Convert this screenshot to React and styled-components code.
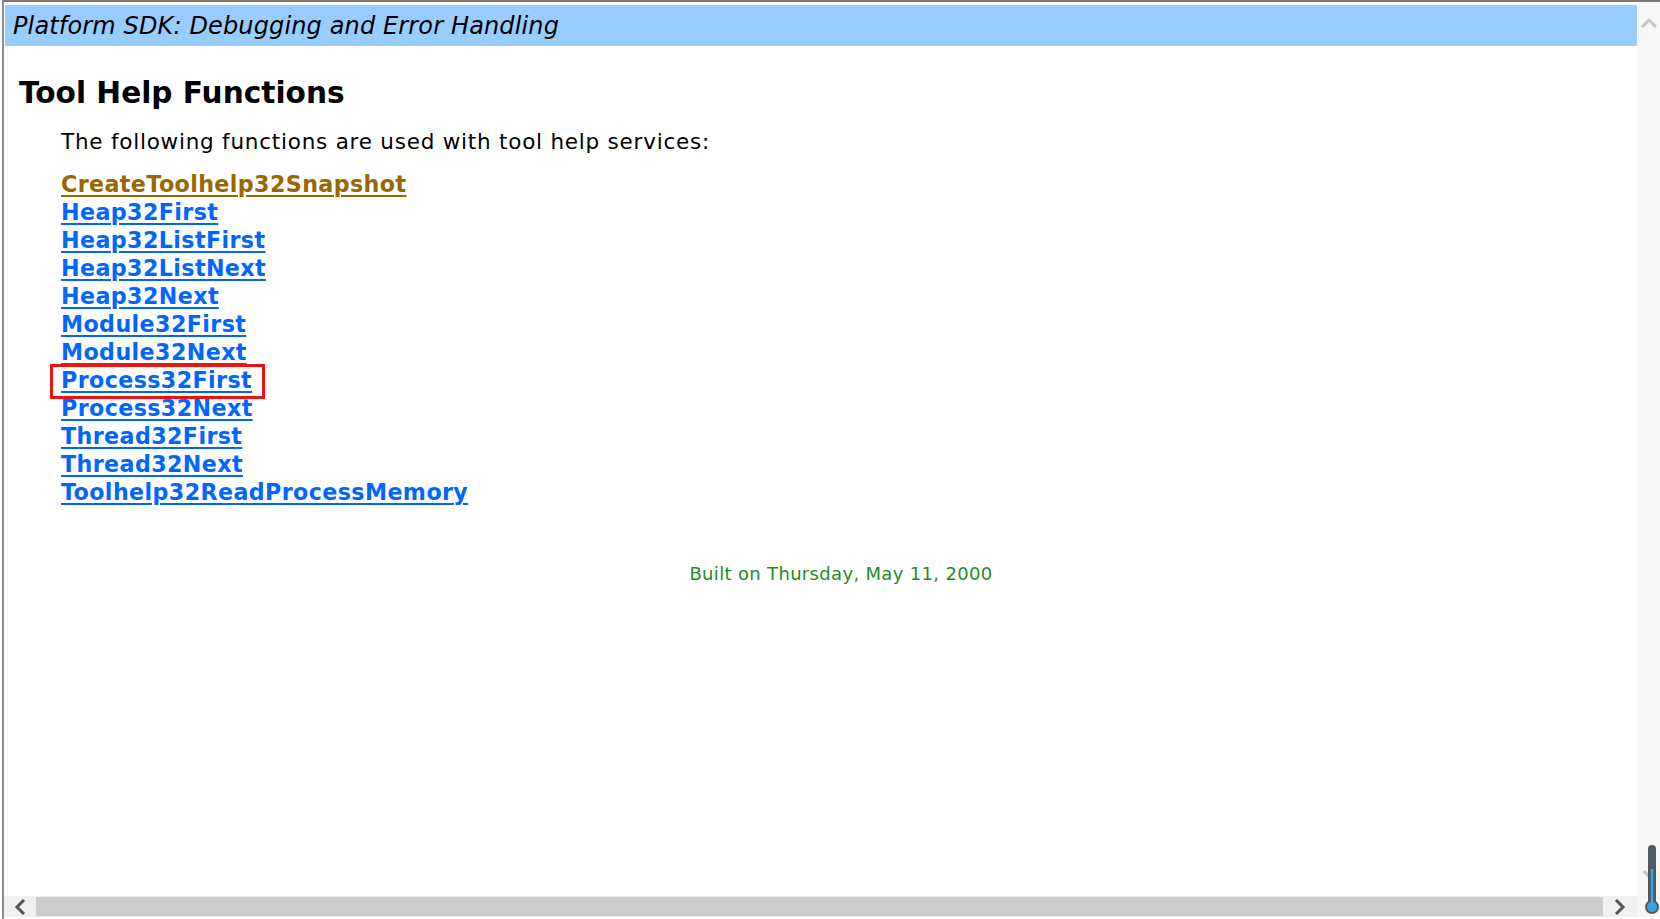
import React from 'react'
import styled, { createGlobalStyle } from 'styled-components'

const links = [
    { name: 'CreateToolhelp32Snapshot', visited: true },
    { name: 'Heap32First' },
    { name: 'Heap32ListFirst' },
    { name: 'Heap32ListNext' },
    { name: 'Heap32Next' },
    { name: 'Module32First' },
    { name: 'Module32Next' },
    { name: 'Process32First', marked: true },
    { name: 'Process32Next' },
    { name: 'Thread32First' },
    { name: 'Thread32Next' },
    { name: 'Toolhelp32ReadProcessMemory' },
]

const GlobalStyle = createGlobalStyle`
    html, body {
        margin: 0;
        padding: 0;
        background: #fff;
        overflow: hidden;
    }
    body {
        font-family: "DejaVu Sans", Verdana, sans-serif;
    }
`

const Window = styled.div`
    position: relative;
    height: 919px;
    box-sizing: border-box;
    margin-left: 2px;
    border-top: 2px solid #7a7a7a;
    border-left: 2px solid #8c8c8c;
    display: flex;
    flex-direction: column;
    overflow: hidden;
`

const Main = styled.div`
    flex: 1;
    display: flex;
    min-height: 0;
`

const Content = styled.div`
    flex: 1;
    padding-top: 3px;
    padding-left: 1px;
`

const Banner = styled.div`
    height: 41px;
    background: #99ccff;
    display: flex;
    align-items: center;
    padding-left: 8px;
    font-size: 24px;
    letter-spacing: 0.14px;
    font-style: italic;
    color: #000;
`

const Title = styled.h1`
    margin: 30px 0 0 14px;
    font-size: 29.6px;
    line-height: 35px;
    font-weight: bold;
    color: #000;
`

const Indent = styled.div`
    margin-left: 56px;
`

const Intro = styled.p`
    margin: 18px 0 15px;
    font-size: 21.5px;
    letter-spacing: 0.77px;
    line-height: 26px;
`

const LinkList = styled.div`
    display: flex;
    flex-direction: column;
    align-items: flex-start;
`

const FuncLink = styled.a`
    position: relative;
    font-size: 22.2px;
    letter-spacing: 0.4px;
    line-height: 28px;
    font-weight: bold;
    color: ${props => props.$visited ? '#996600' : '#0066ff'};
    text-decoration: underline;
    text-decoration-thickness: 2px;
    text-underline-offset: 3px;
`

const Marker = styled.span`
    position: absolute;
    left: -11px;
    right: -13px;
    top: -2px;
    bottom: -5px;
    border: 3px solid #ee1111;
    pointer-events: none;
`

const Footer = styled.p`
    margin: 57px 0 0 40px;
    text-align: center;
    font-size: 18px;
    letter-spacing: 0.33px;
    line-height: 22px;
    color: #1f8c1f;
`

const VScroll = styled.div`
    width: 23px;
    background: #f7f7f7;
    display: flex;
    flex-direction: column;
    align-items: center;
    justify-content: space-between;
    padding: 15px 0 14px;
`

const HScroll = styled.div`
    height: 21px;
    margin-bottom: 2px;
    display: flex;
    background: #f0f0f0;
`

const ArrowCell = styled.div`
    width: ${props => props.$w}px;
    display: flex;
    align-items: center;
    justify-content: center;
`

const Thumb = styled.div`
    flex: 1;
    margin: 1px 0 1px;
    background: #cdcdcd;
`

const Corner = styled.div`
    width: 23px;
    background: #f7f7f7;
`

const Gauge = styled.svg`
    position: absolute;
    right: 0;
    bottom: 3px;
`

export default function App() {
    return (
        <>
            <GlobalStyle />
            <Window>
                <Main>
                    <Content>
                        <Banner>Platform SDK: Debugging and Error Handling</Banner>
                        <Title>Tool Help Functions</Title>
                        <Indent>
                            <Intro>The following functions are used with tool help services:</Intro>
                            <LinkList>
                                {links.map(link => (
                                    <FuncLink key={link.name} href="#" $visited={link.visited}>
                                        {link.name}
                                        {link.marked && <Marker />}
                                    </FuncLink>
                                ))}
                            </LinkList>
                        </Indent>
                        <Footer>Built on Thursday, May 11, 2000</Footer>
                    </Content>
                    <VScroll>
                        <svg width="16" height="12" viewBox="0 0 16 12">
                            <path d="M1 10 L8 3 L15 10" fill="none" stroke="#c6c6c6" strokeWidth="3" />
                        </svg>
                        <svg width="12" height="13" viewBox="0 0 12 13">
                            <path d="M1 2 L8 10" fill="none" stroke="#c6c6c6" strokeWidth="3" />
                        </svg>
                    </VScroll>
                </Main>
                <HScroll>
                    <ArrowCell $w={32}>
                        <svg width="14" height="16" viewBox="0 0 14 16">
                            <path d="M11 1 L4 8 L11 15" fill="none" stroke="#555" strokeWidth="3" />
                        </svg>
                    </ArrowCell>
                    <Thumb />
                    <ArrowCell $w={34}>
                        <svg width="14" height="16" viewBox="0 0 14 16">
                            <path d="M3 1 L10 8 L3 15" fill="none" stroke="#555" strokeWidth="3" />
                        </svg>
                    </ArrowCell>
                    <Corner />
                </HScroll>
                <Gauge width="16" height="72" viewBox="0 0 16 72">
                    <rect x="4" y="1" width="8" height="60" rx="4" fill="#4f5a63" />
                    <circle cx="8" cy="63" r="7" fill="#4f5a63" />
                    <circle cx="8" cy="63" r="5" fill="#3aa7e3" />
                    <rect x="6.8" y="25" width="2.4" height="36" fill="#3aa7e3" />
                </Gauge>
            </Window>
        </>
    )
}
